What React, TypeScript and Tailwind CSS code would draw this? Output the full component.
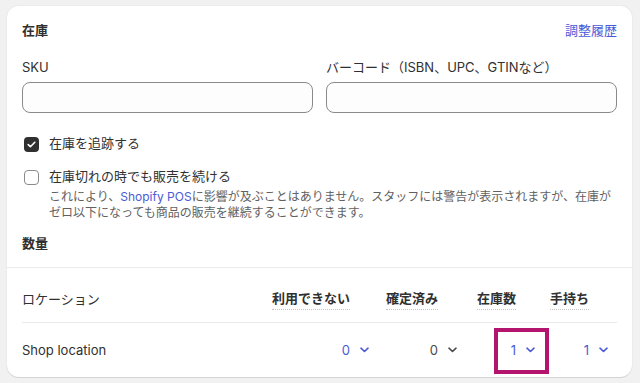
import React from "react";

const Chevron = ({ color }: { color: string }) => (
  <svg width="9" height="6" viewBox="0 0 9 6" fill="none" className="shrink-0">
    <path d="M1 1.2l3.5 3.3L8 1.2" stroke={color} strokeWidth="1.6" strokeLinecap="round" strokeLinejoin="round" />
  </svg>
);

const Head = ({ children, w }: { children: React.ReactNode; w: string }) => (
  <div className={`${w} shrink-0 flex justify-end pr-[28px]`}>
    <span className="font-semibold text-[#303030] leading-[20px] border-b border-dotted border-[#c4c4c4] pb-[1px]">
      {children}
    </span>
  </div>
);

const Val = ({ v, blue, w, boxed }: { v: string; blue?: boolean; w: string; boxed?: boolean }) => (
  <div className={`${w} shrink-0 flex justify-end pr-[9px]`}>
    <div className="relative flex items-center gap-[10px] h-[20px] leading-[20px]">
      <span className={blue ? "text-[#4b5bd6]" : "text-[#4a4a4a]"}>{v}</span>
      <Chevron color={blue ? "#4b5bd6" : "#4a4a4a"} />
      {boxed && (
        <div className="absolute left-[-17px] right-[-14px] top-[-12px] bottom-[-14px] border-[4px] border-[#b3156e]" />
      )}
    </div>
  </div>
);

export default function App() {
  return (
    <div className="min-h-[383px] w-[640px] bg-[#f1f1f1] pt-[6px] pl-[7px] font-['Inter','Noto_Sans_CJK_JP',sans-serif] text-[13px] text-[#303030]">
      <div className="w-[625px] h-[371px] bg-white rounded-[12px] shadow-[0_1px_0_0_#d4d4d4,0_0_0_1px_#ebebeb]">
        <div className="px-[15px] pt-[15px]">
          <div className="flex justify-between items-center h-[20px]">
            <span className="font-semibold">在庫</span>
            <span className="text-[#4b5bd6]">調整履歴</span>
          </div>
          <div className="mt-[16px] flex gap-[13px]">
            <div className="flex-1">
              <div className="leading-[20px]">SKU</div>
              <div className="mt-[5px] h-[31px] rounded-[8px] border border-[#8a8a8a] bg-[#fdfdfd]" />
            </div>
            <div className="flex-1">
              <div className="leading-[20px]">バーコード（ISBN、UPC、GTINなど）</div>
              <div className="mt-[5px] h-[31px] rounded-[8px] border border-[#8a8a8a] bg-[#fdfdfd]" />
            </div>
          </div>
          <div className="mt-[21px] flex items-center h-[20px]">
            <div className="ml-[2px] w-[15px] h-[15px] rounded-[4px] bg-[#303030] flex items-center justify-center">
              <svg width="9" height="7" viewBox="0 0 9 7" fill="none">
                <path d="M1.2 3.6l2.2 2.1L7.8 1.3" stroke="white" strokeWidth="1.6" strokeLinecap="round" strokeLinejoin="round" />
              </svg>
            </div>
            <span className="ml-[10px]">在庫を追跡する</span>
          </div>
          <div className="mt-[13px] flex items-center h-[20px]">
            <div className="ml-[2px] w-[15px] h-[15px] rounded-[4px] border border-[#8a8a8a] bg-white" />
            <span className="ml-[10px]">在庫切れの時でも販売を続ける</span>
          </div>
          <p className="mt-[2px] pl-[27px] text-[12px] leading-[16px] text-[#616161]">
            これにより、<span className="text-[#4b5bd6]">Shopify POS</span>に影響が及ぶことはありません。スタッフには警告が表示されますが、在庫がゼロ以下になっても商品の販売を継続することができます。
          </p>
          <div className="mt-[12px] h-[20px] leading-[20px] font-semibold">数量</div>
        </div>
        <div className="mt-[14px] border-t border-[#ebebeb]" />
        <div className="px-[15px]">
          <div className="pt-[20px] pb-[12px] flex items-center border-b border-[#ebebeb]">
            <div className="flex-1 leading-[20px]">ロケーション</div>
            <Head w="w-[120px]">利用できない</Head>
            <Head w="w-[88px]">確定済み</Head>
            <Head w="w-[78px]">在庫数</Head>
            <Head w="w-[73px]">手持ち</Head>
          </div>
          <div className="pt-[17px] flex items-center h-[20px] box-content">
            <div className="flex-1 leading-[20px]">Shop location</div>
            <Val w="w-[120px]" v="0" blue />
            <Val w="w-[88px]" v="0" />
            <Val w="w-[78px]" v="1" blue boxed />
            <Val w="w-[73px]" v="1" blue />
          </div>
        </div>
      </div>
    </div>
  );
}
